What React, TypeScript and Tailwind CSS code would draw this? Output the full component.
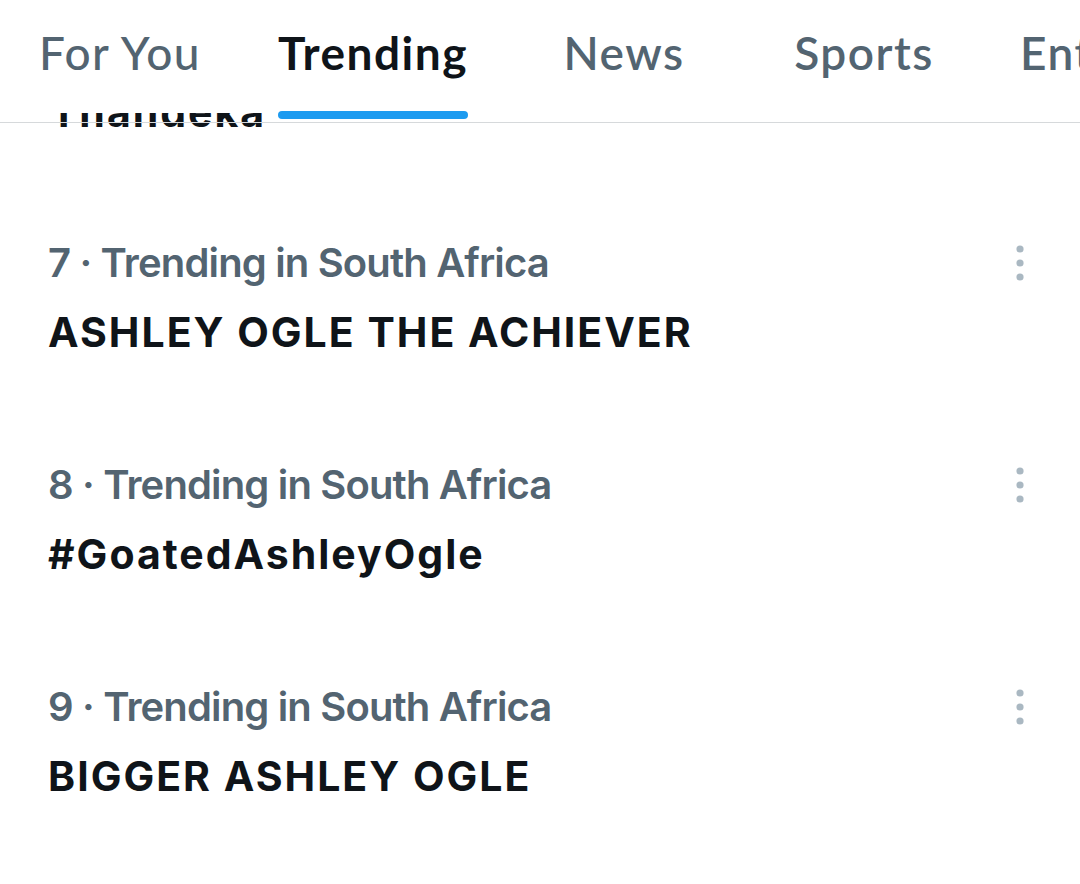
import React from 'react';

type Trend = { rank: number; place: string; title: string };

const trends: Trend[] = [
  { rank: 7, place: 'Trending in South Africa', title: 'ASHLEY OGLE THE ACHIEVER' },
  { rank: 8, place: 'Trending in South Africa', title: '#GoatedAshleyOgle' },
  { rank: 9, place: 'Trending in South Africa', title: 'BIGGER ASHLEY OGLE' },
];

const tabs = [
  { label: 'For You', width: 'w-[240px]', weight: 'font-medium' },
  { label: 'Trending', width: 'w-[266px]', weight: 'font-bold', active: true },
  { label: 'News', width: 'w-[236px]', weight: 'font-semibold' },
  { label: 'Sports', width: 'w-[244px]', weight: 'font-semibold' },
];

const MoreDots: React.FC = () => (
  <svg width="10" height="38" viewBox="0 0 10 38" className="text-[#aab8c2]">
    <circle cx="5" cy="5" r="3.6" fill="currentColor" />
    <circle cx="5" cy="19" r="3.6" fill="currentColor" />
    <circle cx="5" cy="33" r="3.6" fill="currentColor" />
  </svg>
);

const TrendRow: React.FC<{ trend: Trend }> = ({ trend }) => (
  <div className="pl-[48px] pr-[55px] pt-[48px] pb-[49px]">
    <div className="flex items-center justify-between">
      <span className="text-[40px] leading-[56px] font-semibold text-[#536471] tracking-[-0.85px]">
        {trend.rank} · {trend.place}
      </span>
      <MoreDots />
    </div>
    <div className="mt-[13px] text-[41px] leading-[56px] font-bold text-[#0f1419] tracking-[2px]">
      {trend.title}
    </div>
  </div>
);

const App: React.FC = () => {
  return (
    <div className="relative w-[1080px] h-[884px] overflow-hidden bg-white font-['Inter',sans-serif]">
      {/* Scrolled list, the previous trend is cut by the tab bar */}
      <div className="pt-[84px]">
        <div className="pl-[50px] pb-[47px] text-[41px] leading-[56px] font-bold text-[#0f1419] tracking-[2px]">
          Thandeka
        </div>
        {trends.map((t) => (
          <TrendRow key={t.rank} trend={t} />
        ))}
      </div>

      {/* Tab bar over the list */}
      <div className="absolute inset-x-0 top-0 h-[123px] border-b border-[#d6d9db] bg-[linear-gradient(to_bottom,white_113px,transparent_113px)] font-['Lato',sans-serif]">
        <div className="flex h-full">
          {tabs.map((tab) => (
            <div key={tab.label} className={`${tab.width} shrink-0 flex justify-center h-full`}>
              <div className="inline-flex flex-col h-full pt-[27px]">
                <span
                  className={`text-[46px] leading-[52px] tracking-[1.5px] ${tab.weight} ${
                    tab.active ? 'text-[#0f1419]' : 'text-[#536471]'
                  }`}
                >
                  {tab.label}
                </span>
                {tab.active && <div className="mt-auto mb-[3px] h-2 rounded-full bg-[#1d9bf0]" />}
              </div>
            </div>
          ))}
          <div className="shrink-0 pl-[34px] pt-[27px]">
            <span className="text-[46px] leading-[52px] tracking-[1.5px] font-semibold text-[#536471] whitespace-nowrap">
              Entertainment
            </span>
          </div>
        </div>
      </div>
    </div>
  );
};

export default App;
